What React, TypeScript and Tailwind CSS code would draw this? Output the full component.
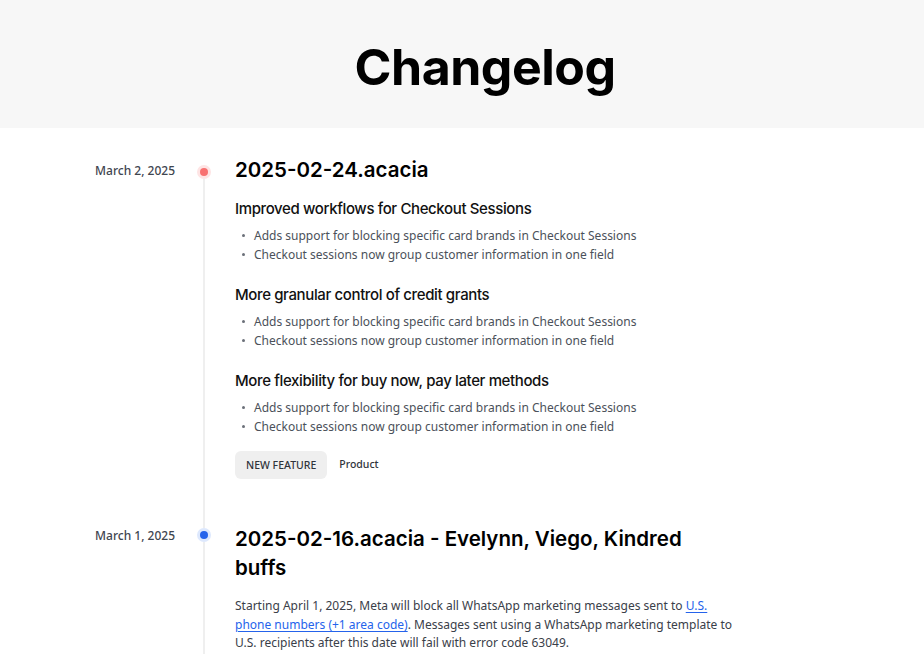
const headFont = { fontFamily: "Inter, 'Noto Sans', sans-serif" };

type Section = { title: string; items: string[] };

const items = [
  "Adds support for blocking specific card brands in Checkout Sessions",
  "Checkout sessions now group customer information in one field",
];

const sections: Section[] = [
  { title: "Improved workflows for Checkout Sessions", items },
  { title: "More granular control of credit grants", items },
  { title: "More flexibility for buy now, pay later methods", items },
];

function Dot({ tone }: { tone: "red" | "blue" }) {
  return (
    <div
      className={`flex h-[14px] w-[14px] shrink-0 items-center justify-center rounded-full ${
        tone === "red" ? "bg-[#fee4e4]" : "bg-[#dde8fd]"
      }`}
    >
      <div className={`h-[8px] w-[8px] rounded-full ${tone === "red" ? "bg-[#f87171]" : "bg-[#2563eb]"}`} />
    </div>
  );
}

export default function App() {
  return (
    <div className="min-h-screen bg-white text-[#111]" style={{ fontFamily: "'Noto Sans', sans-serif" }}>
      <header className="flex h-[128px] bg-[#f7f7f7]">
        <div className="w-[235px] shrink-0" />
        <div className="flex w-[500px] items-center justify-center pt-[7px]">
          <h1 className="text-[50px] font-bold tracking-[-0.01em] text-black" style={headFont}>
            Changelog
          </h1>
        </div>
      </header>

      <main>
        {/* entry 1 */}
        <div className="flex">
          <div className="w-[175px] shrink-0 pt-[35px] text-right text-[12px] leading-[16px] font-medium text-[#3f4650]">
            March 2, 2025
          </div>
          <div className="flex w-[58px] shrink-0 flex-col items-center">
            <div className="h-[37px] w-[2px]" />
            <Dot tone="red" />
            <div className="w-[2px] flex-1 bg-[#efefef]" />
          </div>
          <div className="w-[502px] pt-[27px] pb-[20px] pl-[2px]">
            <h2 className="text-[20.5px] leading-[29px] font-semibold text-black" style={headFont}>
              2025-02-24.acacia
            </h2>
            <div className="mt-[15px] flex flex-col gap-[21px]">
              {sections.map((s) => (
                <div key={s.title}>
                  <h3 className="text-[15px] leading-[20px] font-medium tracking-[-0.025em] text-[#111]" style={headFont}>
                    {s.title}
                  </h3>
                  <ul className="mt-[7px]">
                    {s.items.map((it) => (
                      <li key={it} className="flex items-center text-[12px] leading-[19px] text-[#4b515a]">
                        <span className="mr-[9px] ml-[7px] h-[3px] w-[3px] shrink-0 rounded-full bg-[#6b7079]" />
                        {it}
                      </li>
                    ))}
                  </ul>
                </div>
              ))}
            </div>
            <div className="mt-[15px] flex items-center gap-[12px]">
              <span className="rounded-md bg-[#efefef] px-[11px] py-[6px] text-[10.5px] leading-[16px] font-medium text-[#2f343b]">
                NEW FEATURE
              </span>
              <span className="text-[10.5px] font-medium text-[#2f343b]">Product</span>
            </div>
          </div>
        </div>

        {/* entry 2 */}
        <div className="flex">
          <div className="w-[175px] shrink-0 pt-[29px] text-right text-[12px] leading-[16px] font-medium text-[#3f4650]">
            March 1, 2025
          </div>
          <div className="flex w-[58px] shrink-0 flex-col items-center">
            <div className="h-[29px] w-[2px] bg-[#efefef]" />
            <Dot tone="blue" />
            <div className="w-[2px] flex-1 bg-[#efefef]" />
          </div>
          <div className="w-[502px] pt-[25px] pb-[40px] pl-[2px]">
            <h2 className="text-[20.5px] leading-[29px] font-semibold text-black" style={headFont}>
              2025-02-16.acacia - Evelynn, Viego, Kindred buffs
            </h2>
            <p className="mt-[15px] text-[12px] leading-[18.5px] text-[#3a4049]">
              Starting April 1, 2025, Meta will block all WhatsApp marketing messages sent to{" "}
              <a href="#" className="text-[#2563eb] underline underline-offset-2">
                U.S. phone numbers (+1 area code)
              </a>
              . Messages sent using a WhatsApp marketing template to U.S. recipients after this date will fail with
              error code 63049.
            </p>
          </div>
        </div>
      </main>
    </div>
  );
}
